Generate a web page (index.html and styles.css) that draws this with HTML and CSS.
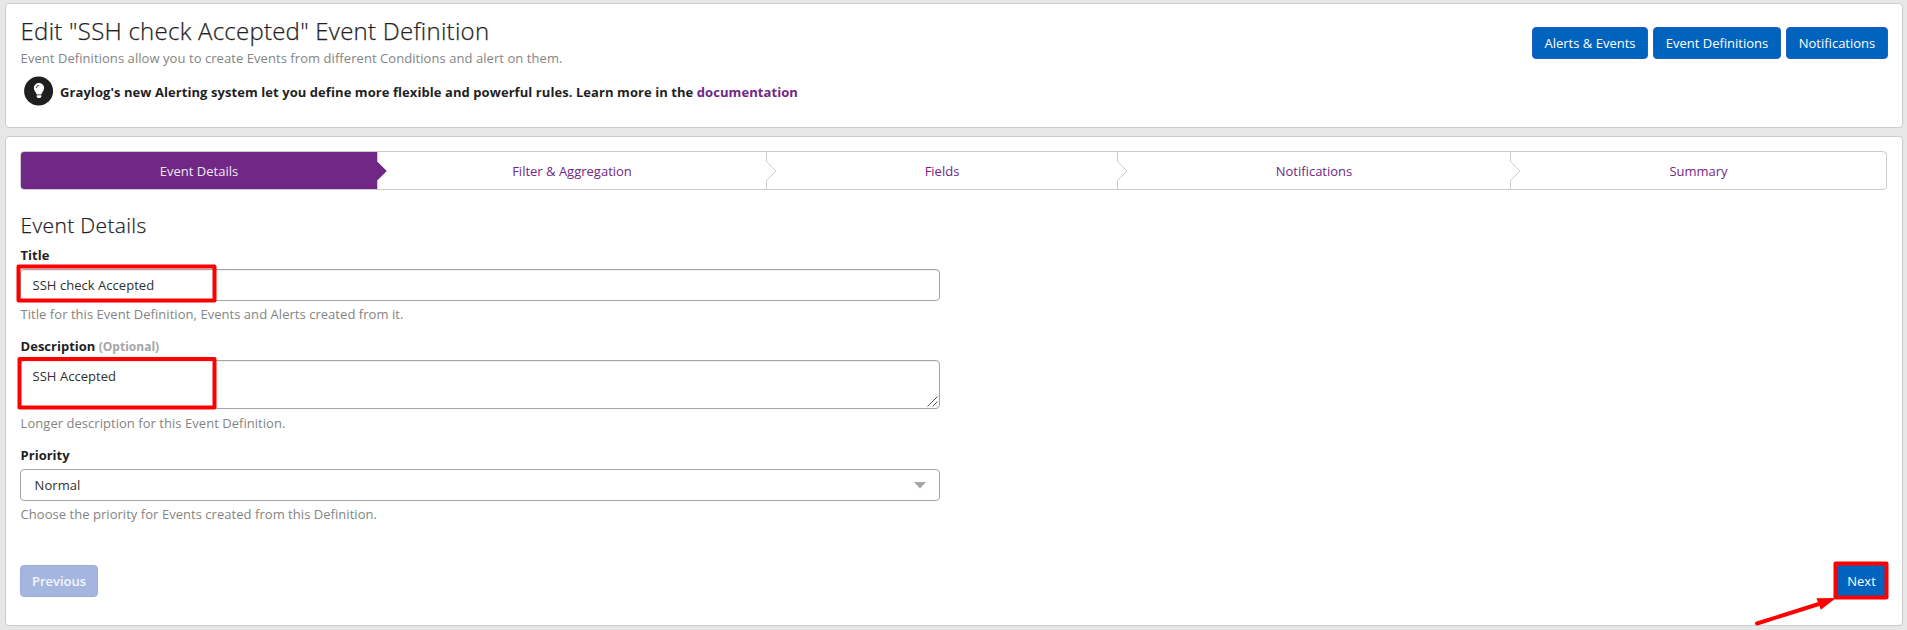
FILE: index.html
```html
<!DOCTYPE html>
<html lang="en">
<head>
<meta charset="utf-8">
<title>Edit "SSH check Accepted" Event Definition</title>
<link rel="stylesheet" href="styles.css">
</head>
<body>
<header class="card page-header">
  <div class="intro">
    <h1 class="page-title">Edit "SSH check Accepted" Event Definition</h1>
    <p class="lead">Event Definitions allow you to create Events from different Conditions and alert on them.</p>
    <div class="tip">
      <svg class="tip-icon" viewBox="0 0 30 30" aria-hidden="true">
        <circle cx="14.600" cy="14.900" r="14.500" fill="#1f1f1f"/>
        <path d="M15 7.100c-2.900 0-5.100 2.300-5.100 5 0 1.300.5 2.400 1.200 3.300.7.9 1.400 2 1.600 3.100h4.600c.2-1.100.9-2.200 1.600-3.100.7-.9 1.200-2 1.200-3.300 0-2.700-2.200-5-5.100-5z" fill="#fff"/>
        <path d="M12.300 12c0-1.400 1.100-2.500 2.600-2.500" fill="none" stroke="#1f1f1f" stroke-width=".9"/>
        <path d="M12.700 19.300h4.600v1.300l-.9 1.400h-2.800l-.9-1.400z" fill="#fff"/>
      </svg>
      <p class="tip-text">Graylog's new Alerting system let you define more flexible and powerful rules. Learn more in the <a class="link" href="#">documentation</a></p>
    </div>
  </div>
  <nav class="actions">
    <button class="btn btn-alerts">Alerts &amp; Events</button>
    <button class="btn btn-definitions">Event Definitions</button>
    <button class="btn btn-notifications">Notifications</button>
  </nav>
</header>
<main class="card content">
  <nav class="steps">
    <a class="step active" href="#">Event Details<svg class="chevron" viewBox="0 0 12 22"><path d="M0 1l10 10L0 21"/></svg></a>
    <a class="step" href="#">Filter &amp; Aggregation<svg class="chevron" viewBox="0 0 12 22"><path d="M0 1l10 10L0 21"/></svg></a>
    <a class="step" href="#">Fields<svg class="chevron" viewBox="0 0 12 22"><path d="M0 1l10 10L0 21"/></svg></a>
    <a class="step" href="#">Notifications<svg class="chevron" viewBox="0 0 12 22"><path d="M0 1l10 10L0 21"/></svg></a>
    <a class="step" href="#">Summary</a>
  </nav>
  <form class="form">
    <h2 class="section-title">Event Details</h2>
    <div class="group">
      <label class="label" for="title">Title</label>
      <input class="control" id="title" type="text" value="SSH check Accepted">
      <span class="help">Title for this Event Definition, Events and Alerts created from it.</span>
    </div>
    <div class="group group-description">
      <label class="label" for="description">Description <small class="optional">(Optional)</small></label>
      <div class="area-wrap">
        <textarea class="control area" id="description">SSH Accepted</textarea>
        <svg class="grip" viewBox="0 0 11 11"><path d="M.5 10.500l10-10M5.500 10.500l5-5"/></svg>
      </div>
      <span class="help">Longer description for this Event Definition.</span>
    </div>
    <div class="group">
      <span class="label">Priority</span>
      <div class="control select">Normal<svg class="caret" viewBox="0 0 12 7"><path d="M0 0h12L6 6.500z"/></svg></div>
      <span class="help">Choose the priority for Events created from this Definition.</span>
    </div>
  </form>
  <div class="pager">
    <button class="btn btn-previous" disabled>Previous</button>
    <button class="btn btn-next">Next</button>
  </div>
</main>
<svg class="annotations" viewBox="0 0 1907 630" aria-hidden="true">
  <rect x="18.500" y="266.500" width="196" height="34"/>
  <rect x="19.500" y="359" width="195" height="48.500"/>
  <rect x="1835.500" y="563.500" width="51" height="34"/>
  <path class="shaft" d="M1757 623.500L1822 603"/>
  <path class="head" d="M1836 598l-19.500.2 4.300 11.500z"/>
</svg>
</body>
</html>
```
FILE: styles.css
```css
* { box-sizing: border-box; }
body {
  margin: 0;
  padding: 3px 4px 4px 5px;
  height: 630px;
  display: flex;
  flex-direction: column;
  gap: 8px;
  background: #e7e7e7;
  color: #1f1f1f;
  font: 13px/18px "Open Sans", sans-serif;
  overflow: hidden;
}
h1, h2, p { margin: 0; }
.card {
  background: #fff;
  border: 1px solid #cdcdcd;
  border-radius: 4px;
}
.page-header {
  height: 125px;
  padding: 14px 14px 0;
  display: flex;
  justify-content: space-between;
}
.page-title {
  font-size: 24px;
  line-height: 26px;
  font-weight: 300;
  letter-spacing: .25px;
  -webkit-text-stroke: .25px #1f1f1f;
}
.lead { margin-top: 5px; color: #848484; letter-spacing: .06px; }
.tip { display: flex; align-items: center; margin: 9px 0 0 4px; gap: 6px; }
.tip-icon { width: 30px; height: 30px; }
.tip-text { font-weight: 700; padding-top: 2px; letter-spacing: .07px; }
.link { color: #702785; text-decoration: none; }
.actions { display: flex; gap: 5px; padding-top: 9px; }
.btn {
  height: 32px;
  padding: 0;
  border: 1px solid #1e5fc0;
  border-radius: 4px;
  background: #0063be;
  color: #fff;
  font: 13px/18px "Open Sans", sans-serif;
}
.btn-alerts { width: 116px; }
.btn-definitions { width: 128px; }
.btn-notifications { width: 102px; }
.content { height: 490px; padding: 14px 14px 0; }
.steps {
  display: grid;
  grid-template-columns: 357px 389px 351px 393px 1fr;
  width: 1867px;
  height: 39px;
  border: 1px solid #cdcdcd;
  border-radius: 4px;
}
.step {
  position: relative;
  height: 37px;
  padding-top: 1px;
  border-right: 1px solid #cdcdcd;
  color: #702785;
  line-height: 36px;
  text-align: center;
  text-decoration: none;
}
.step:last-child { border-right: 0; }
.active { background: #702785; color: #f1e9f3; border-radius: 3px 0 0 3px; }
.chevron {
  position: absolute;
  z-index: 1;
  right: -12px;
  top: 8px;
  width: 12px;
  height: 22px;
  fill: #fff;
  stroke: #cdcdcd;
}
.active .chevron { fill: #702785; }
.form { width: 920px; padding-top: 24px; }
.section-title {
  font-size: 21px;
  line-height: 23px;
  font-weight: 300;
  letter-spacing: .35px;
  margin-bottom: 9px;
  -webkit-text-stroke: .25px #1f1f1f;
}
.group { display: flex; flex-direction: column; margin-bottom: 14px; }
.label { height: 18px; font-weight: 700; margin-bottom: 5px; }
.optional { font-size: 12px; line-height: 1; color: #a6a6a6; }
.page-title, .lead, .section-title, .label, .help { padding-left: .6px; }
.control {
  width: 920px;
  height: 32px;
  margin: 0;
  padding: 0 11.5px;
  border: 1px solid #a6a6a6;
  border-radius: 4px;
  background: #fff;
  color: #303030;
  font: 13px/18px "Open Sans", sans-serif;
  letter-spacing: .04px;
  box-shadow: inset 0 1px 1px rgba(0, 0, 0, .075);
}
.area-wrap { position: relative; height: 49px; }
.area { display: block; height: 49px; padding: 6px 11.5px; resize: none; overflow: hidden; }
.grip {
  position: absolute;
  right: 2px;
  bottom: 2px;
  width: 11px;
  height: 11px;
  fill: none;
  stroke: #55555f;
}
.select {
  display: flex;
  align-items: center;
  justify-content: space-between;
  padding: 0 13px 0 13.6px;
  box-shadow: none;
}
.caret { width: 12px; height: 7px; fill: #a6a6a6; }
.help { color: #848484; margin-top: 4px; letter-spacing: .04px; }
.group-description .help { margin-top: 5px; }
.pager { display: flex; justify-content: space-between; padding-top: 28px; }
.btn-previous { width: 78px; background: #a4b5df; border-color: #9bade0; color: #f3f5fb; font-weight: 600; }
.btn-next { width: 53px; }
.annotations {
  position: absolute;
  inset: 0;
  width: 1907px;
  height: 630px;
  pointer-events: none;
  fill: none;
  stroke: #fe0000;
  stroke-width: 4;
  stroke-linejoin: round;
}
.annotations .shaft { stroke-linecap: round; }
.annotations .head { fill: #fe0000; stroke: none; }
```
